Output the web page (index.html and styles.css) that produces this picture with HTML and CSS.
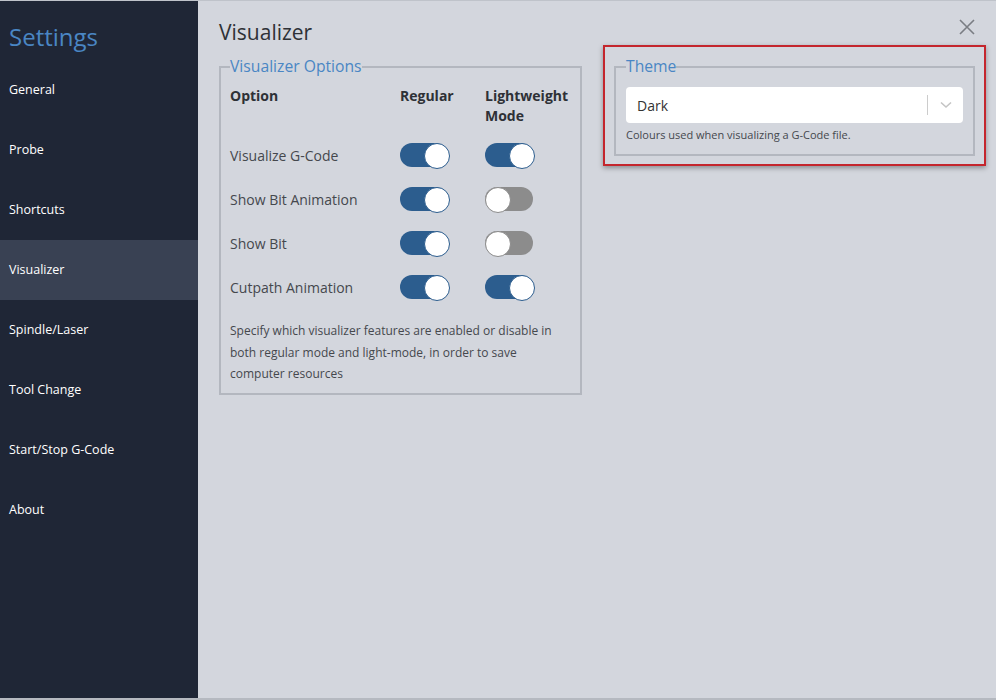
FILE: index.html
```html
<!DOCTYPE html>
<html lang="en">
<head>
    <meta charset="UTF-8">
    <title>Settings</title>
    <link rel="stylesheet" href="styles.css">
</head>
<body>
    <div id="janela">
        <nav id="menu">
            <h1 id="menu-titulo">Settings</h1>
            <a class="menu-item">General</a>
            <a class="menu-item">Probe</a>
            <a class="menu-item">Shortcuts</a>
            <a class="menu-item ativo">Visualizer</a>
            <a class="menu-item">Spindle/Laser</a>
            <a class="menu-item">Tool Change</a>
            <a class="menu-item">Start/Stop G-Code</a>
            <a class="menu-item">About</a>
        </nav>

        <main id="conteudo">
            <div id="cabecalho">
                <h2 id="titulo">Visualizer</h2>
                <a id="fechar">
                    <svg width="16" height="16" viewBox="0 0 16 16">
                        <path d="M1 1 L15 15 M15 1 L1 15" stroke="#7a7d83" stroke-width="1.6" fill="none"/>
                    </svg>
                </a>
            </div>

            <div id="secoes">
                <fieldset class="grupo" id="opcoes">
                    <legend>Visualizer Options</legend>
                    <div class="tabela">
                        <div class="cab">Option</div>
                        <div class="cab">Regular</div>
                        <div class="cab">Lightweight Mode</div>

                        <div class="linha">Visualize G-Code</div>
                        <div class="linha"><span class="chave ligada"></span></div>
                        <div class="linha"><span class="chave ligada"></span></div>

                        <div class="linha">Show Bit Animation</div>
                        <div class="linha"><span class="chave ligada"></span></div>
                        <div class="linha"><span class="chave"></span></div>

                        <div class="linha">Show Bit</div>
                        <div class="linha"><span class="chave ligada"></span></div>
                        <div class="linha"><span class="chave"></span></div>

                        <div class="linha">Cutpath Animation</div>
                        <div class="linha"><span class="chave ligada"></span></div>
                        <div class="linha"><span class="chave ligada"></span></div>
                    </div>
                    <p class="descricao">Specify which visualizer features are enabled or disable in both regular mode and light-mode, in order to save computer resources</p>
                </fieldset>

                <div id="destaque">
                    <fieldset class="grupo" id="tema">
                        <legend>Theme</legend>
                        <div class="selecao">
                            <span class="selecao-valor">Dark</span>
                            <span class="selecao-seta">
                                <svg width="12" height="8" viewBox="0 0 12 8">
                                    <path d="M1 1.5 L6 6 L11 1.5" stroke="#c4c4c4" stroke-width="1.6" fill="none"/>
                                </svg>
                            </span>
                        </div>
                        <p class="ajuda">Colours used when visualizing a G-Code file.</p>
                    </fieldset>
                </div>
            </div>
        </main>
    </div>
</body>
</html>
```

FILE: styles.css
```css
* {
    box-sizing: border-box;
}

body {
    margin: 0;
    font-family: "Open Sans", "Noto Sans", Arial, sans-serif;
    background-color: #d3d6dd;
}

#janela {
    display: flex;
    width: 996px;
    height: 700px;
    border-top: 1px solid #bfc3ca;
    border-bottom: 2px solid #b5b9c0;
}

#menu {
    width: 198px;
    flex-shrink: 0;
    background-color: #1f2636;
    display: flex;
    flex-direction: column;
}

#menu-titulo {
    margin: 0;
    height: 59px;
    padding: 21px 0 0 9px;
    font-size: 24px;
    line-height: 30px;
    font-weight: 400;
    color: #4a86c4;
}

.menu-item {
    height: 60px;
    line-height: 60px;
    padding-left: 9px;
    font-size: 12.5px;
    color: #fff;
    cursor: pointer;
}

.menu-item.ativo {
    background-color: #394153;
}

#conteudo {
    flex-grow: 1;
    padding: 19px 10px 0 21px;
}

#cabecalho {
    display: flex;
    justify-content: space-between;
    align-items: flex-start;
}

#titulo {
    margin: 0;
    font-size: 21px;
    line-height: 25px;
    font-weight: 400;
    color: #2e3136;
}

#fechar {
    margin: -2px 11px 0 0;
    cursor: pointer;
}

#secoes {
    display: flex;
    align-items: flex-start;
    gap: 21px;
}

.grupo {
    margin: 0;
    border: 2px solid #b3b7bf;
    padding: 0 9px 8px 9px;
}

.grupo legend {
    padding: 0;
    font-size: 15.7px;
    line-height: 23px;
    color: #4a86c4;
}

#opcoes {
    width: 363px;
    margin-top: 10px;
}

.tabela {
    display: grid;
    grid-template-columns: 170px 85px 1fr;
    margin-top: 8px;
}

.cab {
    font-size: 14px;
    line-height: 20px;
    font-weight: 700;
    color: #2e3136;
    padding-bottom: 7px;
}

.linha {
    height: 44px;
    display: flex;
    align-items: center;
    font-size: 14px;
    color: #45484d;
}

.chave {
    position: relative;
    width: 48px;
    height: 24px;
    border-radius: 12px;
    background-color: #8c8c8c;
}

.chave::after {
    content: "";
    position: absolute;
    top: 0;
    left: 0;
    width: 24px;
    height: 24px;
    border-radius: 50%;
    background-color: #fff;
    border: 1px solid #8c8c8c;
}

.chave.ligada {
    background-color: #2c5d8e;
}

.chave.ligada::after {
    left: 24px;
    border-color: #2c5d8e;
}

.descricao {
    margin: 11px 0 0 0;
    font-size: 12px;
    line-height: 21.5px;
    color: #45484d;
}

#destaque {
    flex-grow: 1;
    border: 2px solid #c4262d;
    padding: 8px 9px;
    box-shadow: 0 2px 5px rgba(0, 0, 0, .35);
}

#tema {
    padding: 0 10px 11px 10px;
}

.selecao {
    display: flex;
    align-items: center;
    height: 36px;
    margin-top: 9px;
    background-color: #fff;
    border-radius: 4px;
}

.selecao-valor {
    flex-grow: 1;
    padding-left: 11px;
    font-size: 14px;
    color: #333;
}

.selecao-seta {
    width: 36px;
    height: 20px;
    display: flex;
    align-items: center;
    justify-content: center;
    border-left: 1px solid #cccccc;
}

.ajuda {
    margin: 4px 0 0 0;
    font-size: 11px;
    line-height: 16px;
    color: #45484d;
}
```
